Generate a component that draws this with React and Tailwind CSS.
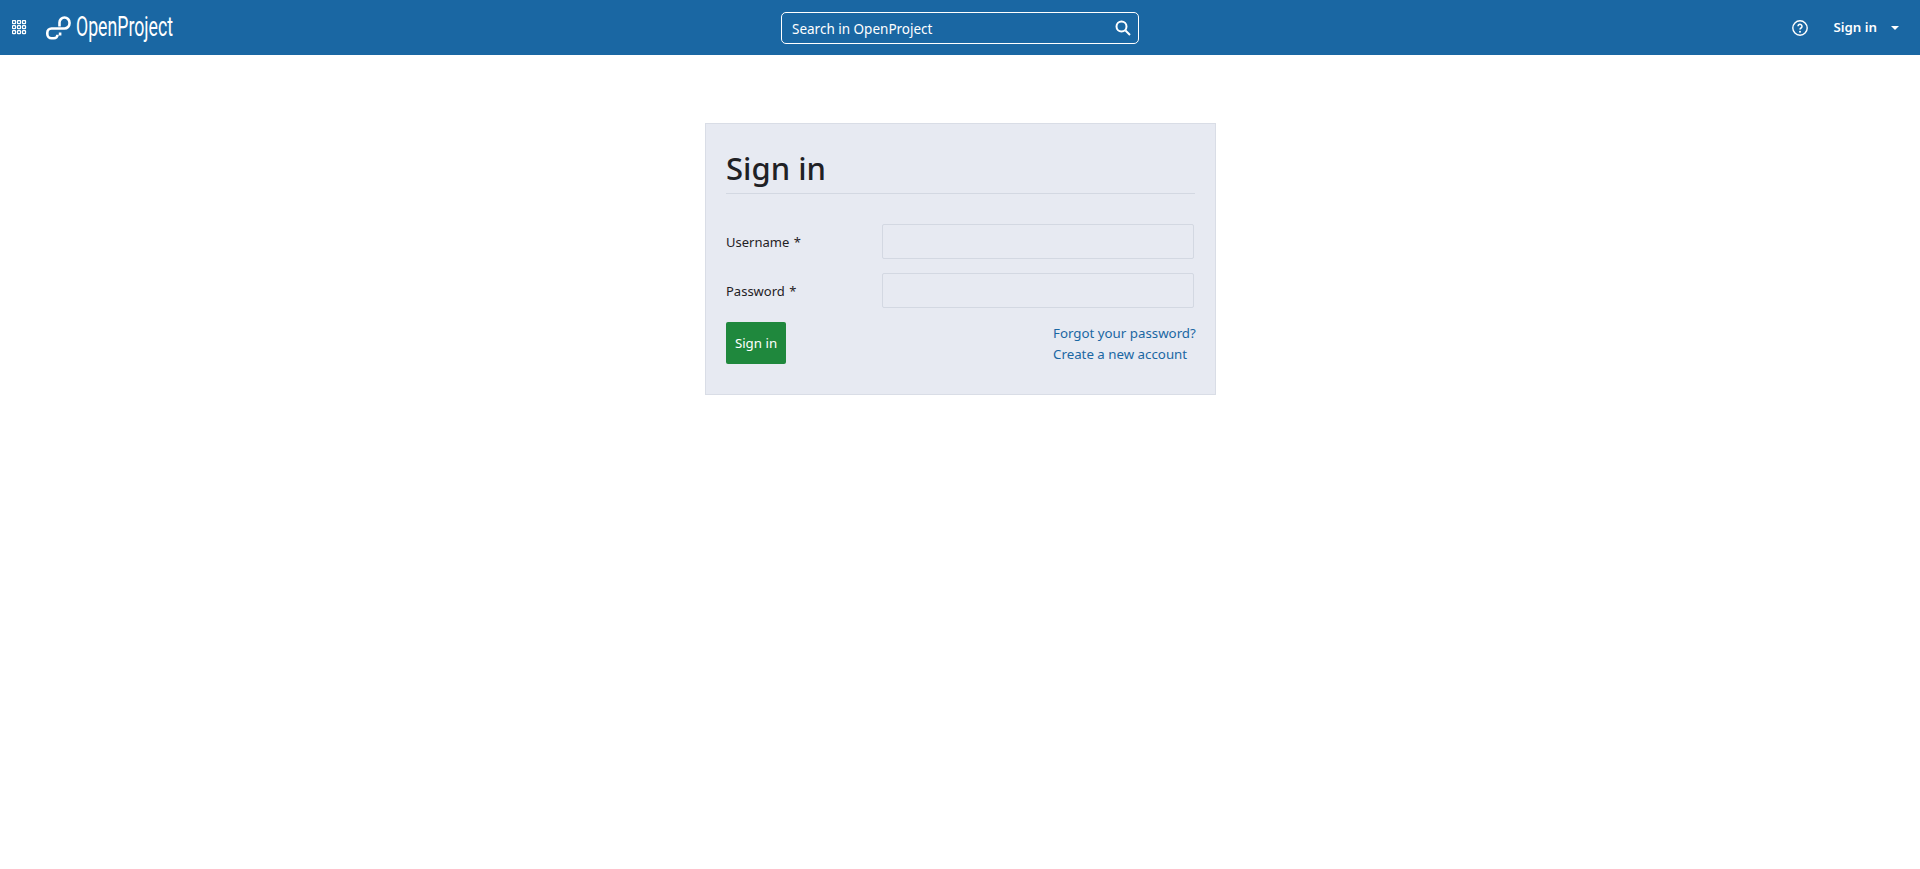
import React from "react";

function Grid() {
  const dots = [];
  for (let y = 0; y < 3; y++) for (let x = 0; x < 3; x++) dots.push(<rect key={x + "-" + y} x={0.5 + x * 5} y={0.5 + y * 5} width="3" height="3" rx="0.6" fill="none" stroke="#fff" strokeWidth="1.25" />);
  return <svg width="15" height="15" viewBox="0 0 15 15">{dots}</svg>;
}

function Logo() {
  return (
    <svg width="25" height="24" viewBox="0 0 25 24" fill="none" stroke="#fff" strokeWidth="2.6">
      <path d="M13.5 10.5 V6.5 a5 5 0 0 1 5 -5 a5 5 0 0 1 5 5 v1 a5 5 0 0 1 -5 5 H5.5 a4.2 4.2 0 0 0 -4.2 4.2 v1.4 a4.2 4.2 0 0 0 4.2 4.2 H8 a3.5 3.5 0 0 0 3.5 -3.5" />
      <rect x="12.8" y="16.5" width="2.6" height="3" fill="#fff" stroke="none" />
    </svg>
  );
}

export default function App() {
  return (
    <div className="min-h-[869px] bg-white font-['Noto_Sans',sans-serif] text-[13.3px]">
      <header className="h-[55px] bg-[#1a67a3] flex items-center text-white relative">
        <div className="w-[46px] flex justify-end pr-[19px]"><Grid /></div>
        <Logo />
        <span className="ml-[5px] font-['Roboto',sans-serif] text-[27px] leading-none origin-left scale-x-[0.655] whitespace-nowrap">OpenProject</span>
        <div className="absolute left-[781px] top-[12px] w-[358px] h-[32px] border border-white rounded-[5px] flex items-center justify-between pl-[10px] pr-[7px]">
          <span className="text-[13.5px] pt-[2px]">Search in OpenProject</span>
          <svg width="16" height="16" viewBox="0 0 16 16" fill="none" stroke="#fff" strokeWidth="2"><circle cx="6.5" cy="6.5" r="5" /><path d="M10.5 10.5 L15 15" /></svg>
        </div>
        <div className="ml-auto flex items-center">
          <svg width="16" height="16" viewBox="0 0 16 16" fill="none" stroke="#fff"><circle cx="8" cy="8" r="7.2" strokeWidth="1.4" /><path d="M6 6.2 a2 2 0 1 1 3 1.8 c-.7 .4 -1 .8 -1 1.6" strokeWidth="1.5" /><circle cx="8" cy="11.7" r="1" fill="#fff" stroke="none" /></svg>
          <span className="ml-[25px] font-semibold text-[13.3px] pt-[1px]">Sign in</span>
          <span className="ml-[14px] mr-[21px] w-0 h-0 border-x-[4.5px] border-x-transparent border-t-[4.5px] border-t-white" />
        </div>
      </header>
      <main className="flex justify-center pt-[68px]">
        <div className="ml-[1px] w-[511px] h-[272px] bg-[#e7eaf2] border border-[#d9dde6] px-[20px] pt-[24px]">
          <h1 className="text-[31px] leading-[40px] font-[550] text-[#1f2125] h-[46px] border-b border-[#d3d8e2]">Sign in</h1>
          <div className="mt-[30px] flex items-center h-[35px]">
            <label className="w-[156px] text-[13px] text-[#1f2125] pt-[2px]">Username <span className="ml-[1px]">*</span></label>
            <div className="w-[312px] h-[35px] border border-[#d3d8e2] rounded-[2px]" />
          </div>
          <div className="mt-[14px] flex items-center h-[35px]">
            <label className="w-[156px] text-[13px] text-[#1f2125] pt-[2px]">Password <span className="ml-[1px]">*</span></label>
            <div className="w-[312px] h-[35px] border border-[#d3d8e2] rounded-[2px]" />
          </div>
          <div className="mt-[14px] flex justify-between">
            <button className="w-[60px] h-[42px] bg-[#1f883d] text-white rounded-[2px] text-[13.3px] pt-[2px]">Sign in</button>
            <div className="w-[142px] text-[#1a67a3] leading-[21px] pt-[1px]">
              <div className="whitespace-nowrap">Forgot your password?</div>
              <div className="whitespace-nowrap">Create a new account</div>
            </div>
          </div>
        </div>
      </main>
    </div>
  );
}
